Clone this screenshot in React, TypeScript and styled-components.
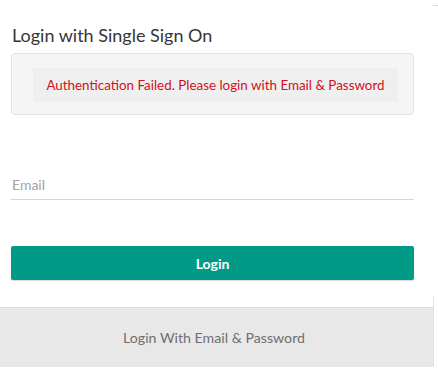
import React from "react";
import styled, { createGlobalStyle } from "styled-components";

const Global = createGlobalStyle`
  html, body { margin: 0; padding: 0; background: #ffffff; }
  body { font-family: Lato, "Open Sans", Arial, sans-serif; }
  * { box-sizing: border-box; }
`;

const Page = styled.div`
  width: 438px;
  height: 374px;
  position: relative;
  overflow: hidden;
  background: #ffffff;
`;

const TopTick = styled.div`
  position: absolute;
  top: 5px;
  right: 0;
  width: 5px;
  height: 1px;
  background: #d8d8d8;
`;

const Content = styled.div`
  display: flex;
  flex-direction: column;
  padding: 24px 24px 0 11px;
`;

const Title = styled.h1`
  margin: 0 0 0 1px;
  font-size: 18px;
  line-height: 22px;
  font-weight: 400;
  color: #363636;
`;

const AlertBox = styled.div`
  margin-top: 7px;
  height: 62px;
  border: 1px solid #e4e4e4;
  border-radius: 4px;
  background: #f5f5f5;
  padding: 14px 15px 12px 21px;
  display: flex;
`;

const AlertInner = styled.div`
  flex: 1;
  background: #efefef;
  display: flex;
  align-items: center;
  justify-content: center;
  font-size: 13.4px;
  color: #d0101c;
`;

const Field = styled.div`
  margin-top: 55px;
  height: 30px;
  border-bottom: 1px solid #d3d7dd;
  display: flex;
  align-items: flex-end;
  padding: 0 0 6px 1px;
`;

const Placeholder = styled.span`
  font-size: 14px;
  color: #a3a3a3;
`;

const Button = styled.button`
  margin-top: 46px;
  height: 34px;
  border: none;
  border-radius: 2px;
  background: #009a87;
  color: #ffffff;
  font-family: Lato, "Open Sans", Arial, sans-serif;
  font-size: 14px;
  font-weight: 700;
  box-shadow: 0 1px 1px rgba(0, 0, 0, 0.15);
`;

const FooterWrap = styled.div`
  margin-top: 16px;
  width: 434px;
  padding-top: 11px;
  border-right: 1px solid #e2e2e2;
`;

const Footer = styled.div`
  height: 60px;
  border-top: 1px solid #dcdcdc;
  background: #e8e8e8;
  display: flex;
  align-items: center;
  justify-content: center;
  padding-right: 5px;
  font-size: 14.2px;
  color: #6f6f6f;
`;

export default function App() {
  return (
    <Page>
      <Global />
      <TopTick />
      <Content>
        <Title>Login with Single Sign On</Title>
        <AlertBox>
          <AlertInner>Authentication Failed. Please login with Email &amp; Password</AlertInner>
        </AlertBox>
        <Field>
          <Placeholder>Email</Placeholder>
        </Field>
        <Button>Login</Button>
      </Content>
      <FooterWrap>
        <Footer>Login With Email &amp; Password</Footer>
      </FooterWrap>
    </Page>
  );
}
